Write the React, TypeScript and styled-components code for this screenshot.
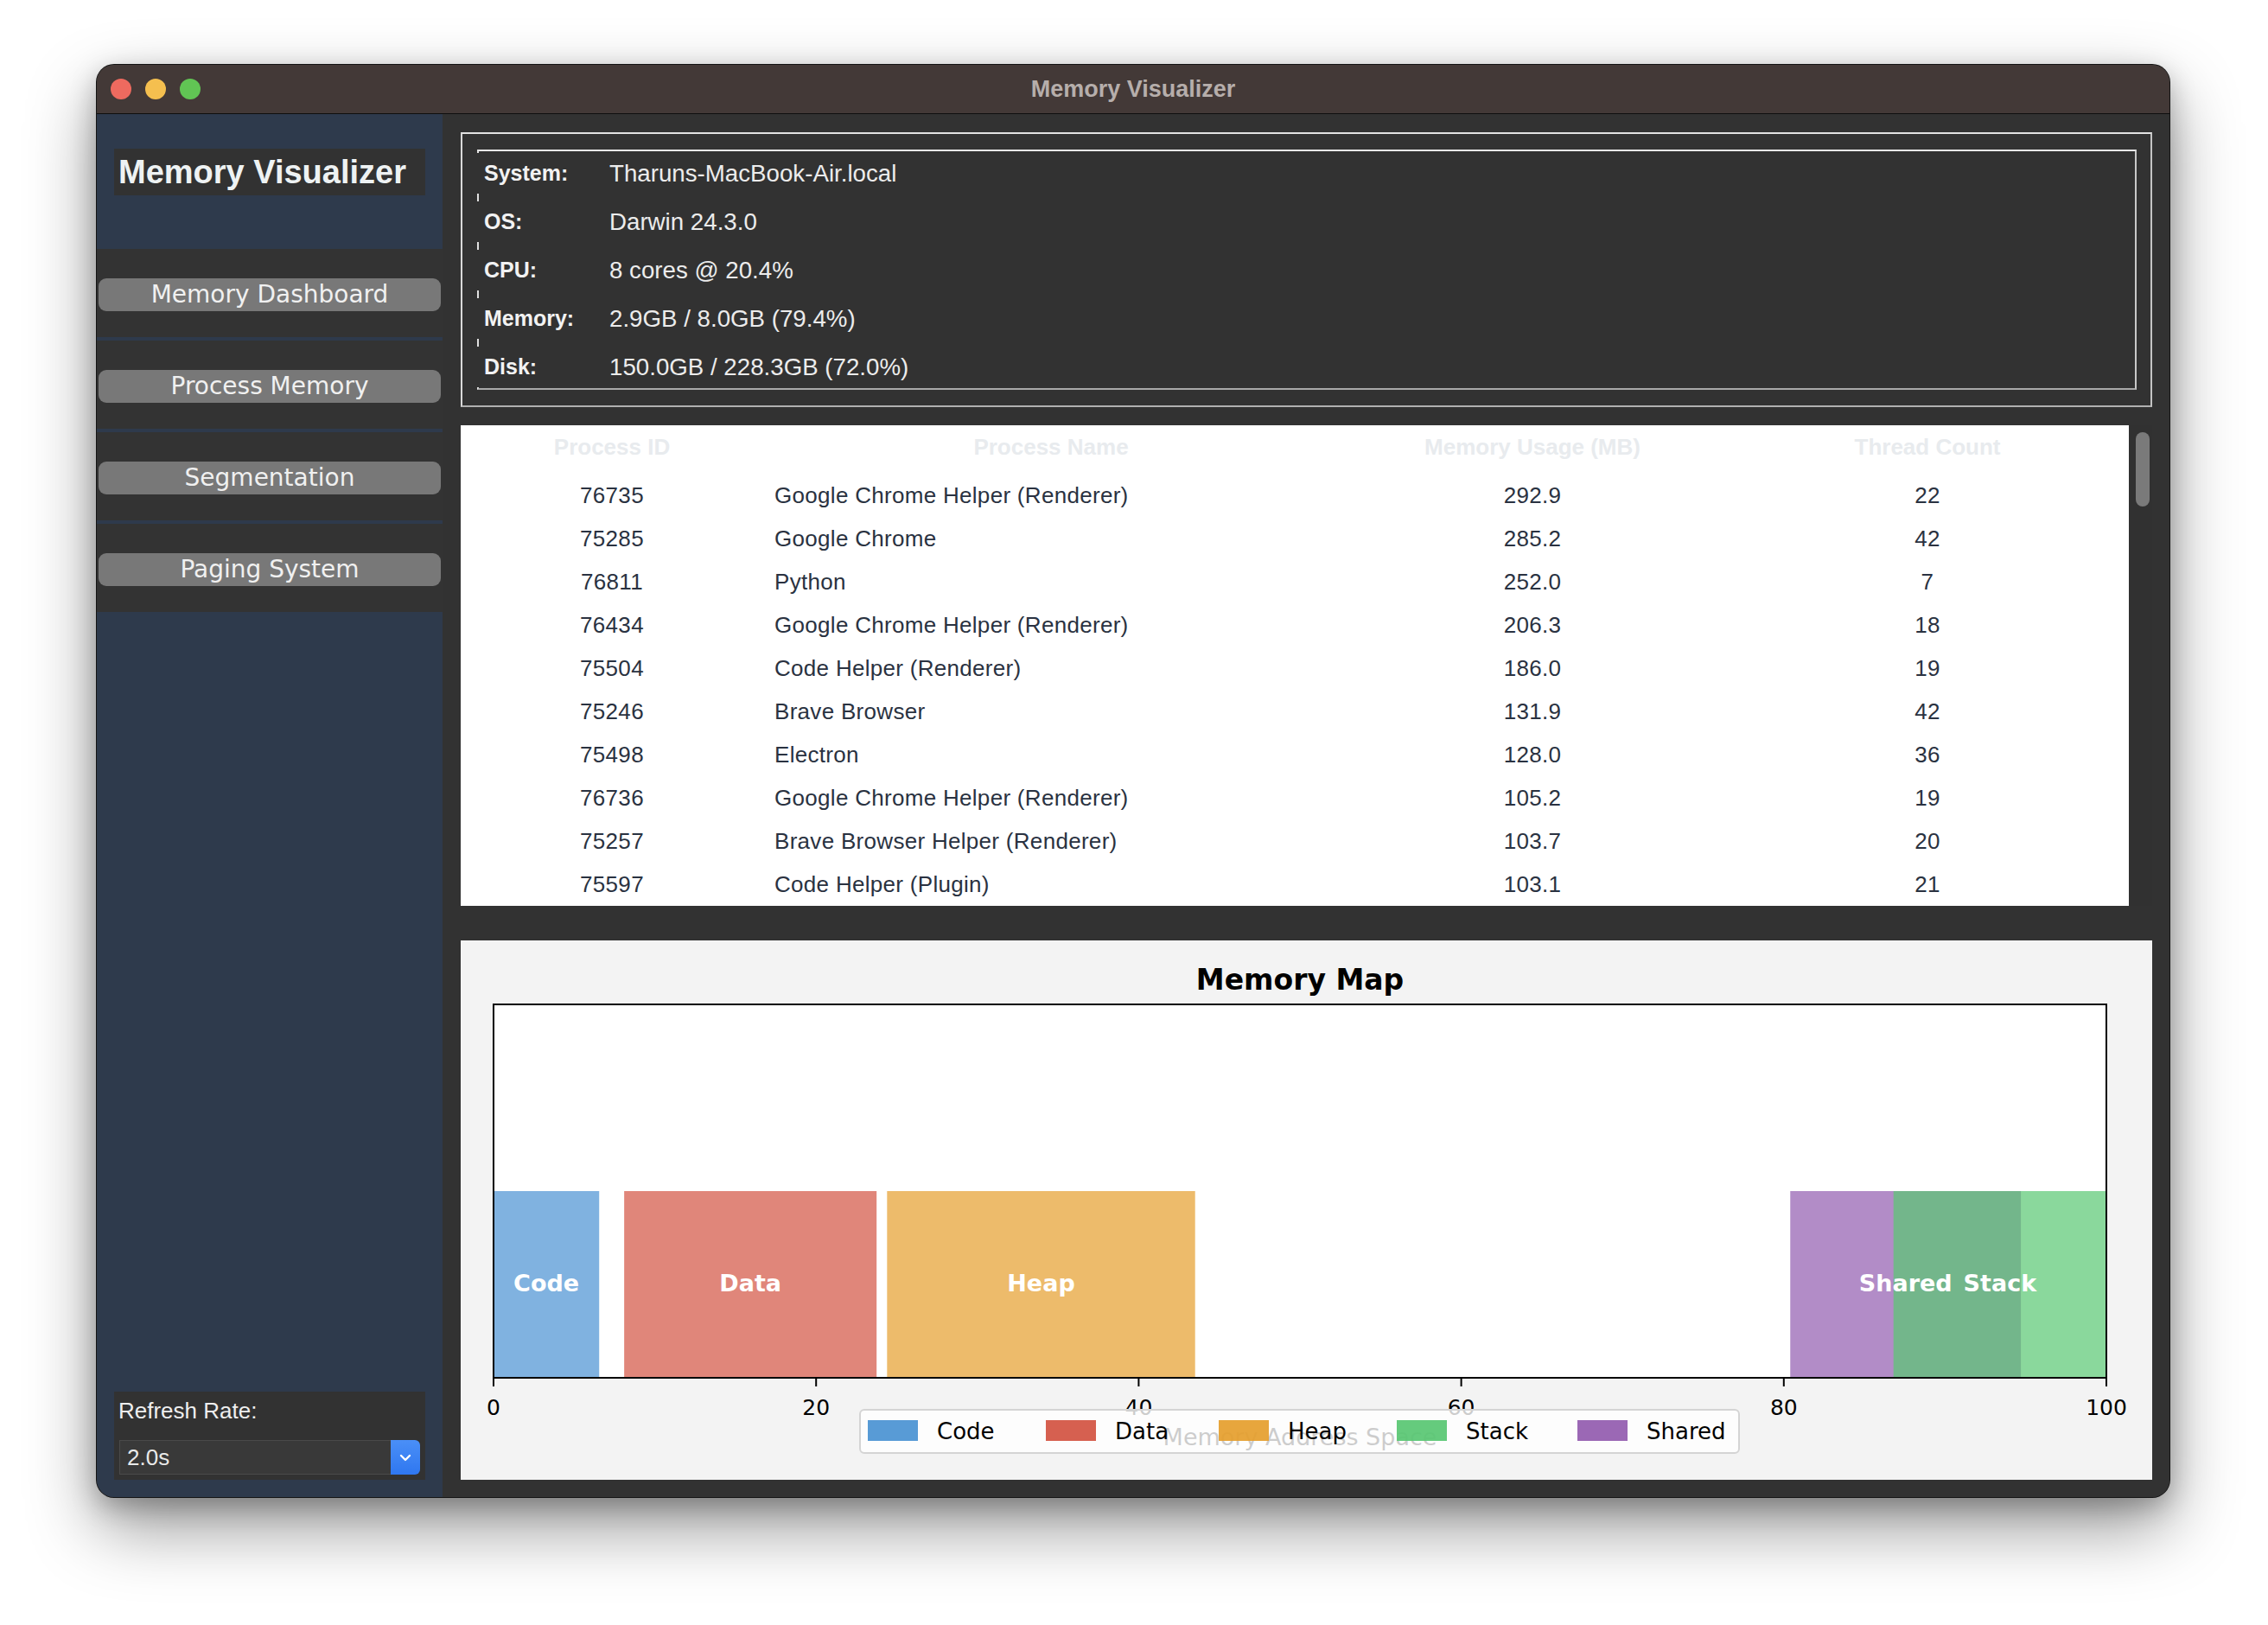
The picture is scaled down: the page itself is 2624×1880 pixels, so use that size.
import React from "react";
import styled, { createGlobalStyle } from "styled-components";

const GlobalStyle = createGlobalStyle`
  html, body {
    margin: 0;
    padding: 0;
    background: #ffffff;
  }
  body {
    font-family: "Liberation Sans", Arial, sans-serif;
  }
`;

const Page = styled.div`
  width: 2624px;
  height: 1880px;
  box-sizing: border-box;
  padding: 75px 0 0 112px;
`;

const Window = styled.div`
  width: 2398px;
  height: 1657px;
  border-radius: 20px;
  overflow: hidden;
  display: flex;
  flex-direction: column;
  background: #323232;
  box-shadow: 0 0 0 1px #141414, 0 34px 80px rgba(0, 0, 0, 0.42),
    0 10px 30px rgba(0, 0, 0, 0.25);
`;

const TitleBar = styled.div`
  height: 56px;
  flex: none;
  display: grid;
  grid-template-columns: 1fr auto 1fr;
  align-items: center;
  background: #433937;
  border-bottom: 1px solid #0e0e0e;
`;

const Lights = styled.div`
  display: flex;
  gap: 16px;
  padding-left: 16px;
`;

const Light = styled.span<{ $color: string }>`
  width: 24px;
  height: 24px;
  border-radius: 50%;
  background: ${(p) => p.$color};
`;

const WindowTitle = styled.div`
  color: #b6aeab;
  font-size: 27px;
  font-weight: 700;
  font-family: "Liberation Sans", Arial, sans-serif;
`;

const Body = styled.div`
  flex: 1;
  display: flex;
  min-height: 0;
`;

/* ---------- sidebar ---------- */

const Sidebar = styled.div`
  width: 400px;
  flex: none;
  display: flex;
  flex-direction: column;
  background: #2e3a4c;
`;

const LogoArea = styled.div`
  padding: 40px 20px 62px;
`;

const Logo = styled.div`
  height: 54px;
  display: flex;
  align-items: center;
  padding-left: 5px;
  background: #323232;
  color: #eef2f3;
  font-size: 38px;
  font-weight: 700;
  font-family: "Liberation Sans", Arial, sans-serif;
`;

const Nav = styled.div`
  display: flex;
  flex-direction: column;
  gap: 4px;
`;

const NavItem = styled.div`
  height: 102px;
  box-sizing: border-box;
  padding: 34px 2px 0;
  background: #333333;
`;

const NavButton = styled.button`
  width: 100%;
  height: 38px;
  border: 0;
  border-radius: 9px;
  background: #787878;
  color: #f0f0f0;
  font-family: "DejaVu Sans", Verdana, sans-serif;
  font-size: 28px;
  line-height: 38px;
  padding: 0;
  cursor: pointer;
`;

const Spacer = styled.div`
  flex: 1;
`;

const RefreshBox = styled.div`
  margin: 0 20px 20px;
  height: 102px;
  box-sizing: border-box;
  padding: 3px 6px 0 5px;
  background: #323232;
`;

const RefreshLabel = styled.div`
  color: #eeeeee;
  font-size: 26px;
  line-height: 38px;
`;

const Combo = styled.div`
  margin-top: 15px;
  display: flex;
  height: 40px;
  margin-left: 1px;
`;

const ComboField = styled.div`
  flex: 1;
  box-sizing: border-box;
  display: flex;
  align-items: center;
  padding-left: 8px;
  background: #393939;
  border: 1px solid #4a4a4a;
  border-right: 0;
  color: #e9e9e9;
  font-size: 26px;
`;

const ComboArrow = styled.div`
  width: 34px;
  display: flex;
  align-items: center;
  justify-content: center;
  border-radius: 0 6px 6px 0;
  background: linear-gradient(#4a8ff7, #2f77f0);
`;

/* ---------- main ---------- */

const Main = styled.div`
  flex: 1;
  display: flex;
  flex-direction: column;
  padding: 21px 20px 20px 21px;
  background: #323232;
`;

const InfoOuter = styled.div`
  height: 318px;
  box-sizing: border-box;
  padding: 18px 16px 18px 17px;
  border: 2px solid;
  border-color: #e2e2e2 #c4c4c4 #b0b0b0 #d8d8d8;
`;

const InfoInner = styled.div`
  display: flex;
  flex-direction: column;
  gap: 9px;
  padding: 2px 0 1px;
  border: 2px solid;
  border-color: #e8e8e8 #c8c8c8 #a8a8a8 #e0e0e0;
`;

const InfoRow = styled.div`
  height: 47px;
  margin-left: -2px;
  padding-left: 8px;
  display: flex;
  align-items: center;
  background: #323232;
`;

const InfoLabel = styled.span`
  width: 145px;
  flex: none;
  color: #f2f2f2;
  font-size: 25px;
  font-weight: 700;
`;

const InfoValue = styled.span`
  color: #ececec;
  font-size: 27.7px;
`;

const TableWrap = styled.div`
  margin-top: 21px;
  height: 556px;
  display: flex;
`;

const Table = styled.div`
  flex: 1;
  background: #ffffff;
  display: grid;
  grid-template-columns: 350px 666px 448px 1fr;
  grid-auto-rows: 50px;
  grid-template-rows: 56px;
  align-items: center;
`;

const HeadCell = styled.div`
  text-align: center;
  color: #e8ebee;
  font-size: 26px;
  font-weight: 700;
  padding-bottom: 6px;
`;

const Cell = styled.div<{ $left?: boolean }>`
  text-align: ${(p) => (p.$left ? "left" : "center")};
  padding-left: ${(p) => (p.$left ? "13px" : "0")};
  color: #2a3241;
  font-size: 26px;
  letter-spacing: 0.3px;
`;

const ScrollTrack = styled.div`
  width: 27px;
  flex: none;
  background: #313131;
  padding: 8px 0 0 8px;
  box-sizing: border-box;
`;

const ScrollThumb = styled.div`
  width: 16px;
  height: 86px;
  border-radius: 8px;
  background: #7a7a7a;
`;

const ChartPanel = styled.div`
  margin-top: 40px;
  height: 624px;
  background: #f3f3f3;
`;

const Chart = styled.svg`
  display: block;
  font-family: "DejaVu Sans", sans-serif;
`;

const info = [
  ["System:", "Tharuns-MacBook-Air.local"],
  ["OS:", "Darwin 24.3.0"],
  ["CPU:", "8 cores @ 20.4%"],
  ["Memory:", "2.9GB / 8.0GB (79.4%)"],
  ["Disk:", "150.0GB / 228.3GB (72.0%)"],
];

const processes = [
  ["76735", "Google Chrome Helper (Renderer)", "292.9", "22"],
  ["75285", "Google Chrome", "285.2", "42"],
  ["76811", "Python", "252.0", "7"],
  ["76434", "Google Chrome Helper (Renderer)", "206.3", "18"],
  ["75504", "Code Helper (Renderer)", "186.0", "19"],
  ["75246", "Brave Browser", "131.9", "42"],
  ["75498", "Electron", "128.0", "36"],
  ["76736", "Google Chrome Helper (Renderer)", "105.2", "19"],
  ["75257", "Brave Browser Helper (Renderer)", "103.7", "20"],
  ["75597", "Code Helper (Plugin)", "103.1", "21"],
];

const segments = [
  { name: "Code", start: 0, size: 6.55, color: "#4a92d3" },
  { name: "Data", start: 8.1, size: 15.65, color: "#d35241" },
  { name: "Heap", start: 24.4, size: 19.1, color: "#e59e2c" },
  { name: "Shared", start: 80.4, size: 14.3, color: "#925baf" },
  { name: "Stack", start: 86.8, size: 13.2, color: "#58c772" },
];

const legend = [
  { name: "Code", x: 471, color: "#4a92d3" },
  { name: "Data", x: 677, color: "#d35241" },
  { name: "Heap", x: 877, color: "#e59e2c" },
  { name: "Stack", x: 1083, color: "#58c772" },
  { name: "Shared", x: 1292, color: "#925baf" },
];

const AX = { left: 38, top: 74, right: 1904, bottom: 506 };
const toX = (u: number) => AX.left + (u / 100) * (AX.right - AX.left);
const BAR_TOP = 290;

const MemoryMap = () => (
  <Chart width={1957} height={624}>
    <text x={971} y={57} textAnchor="middle" fontSize={33} fontWeight={700} fill="#000">
      Memory Map
    </text>
    <rect x={AX.left} y={AX.top} width={AX.right - AX.left} height={AX.bottom - AX.top} fill="#fff" />
    {segments.map((s) => (
      <rect
        key={s.name}
        x={toX(s.start)}
        y={BAR_TOP}
        width={toX(s.start + s.size) - toX(s.start)}
        height={AX.bottom - BAR_TOP}
        fill={s.color}
        fillOpacity={0.7}
      />
    ))}
    {segments.map((s) => (
      <text
        key={s.name}
        x={(toX(s.start) + toX(s.start + s.size)) / 2}
        y={406}
        textAnchor="middle"
        fontSize={27}
        fontWeight={700}
        fill="#fff"
      >
        {s.name}
      </text>
    ))}
    <rect
      x={AX.left}
      y={AX.top}
      width={AX.right - AX.left}
      height={AX.bottom - AX.top}
      fill="none"
      stroke="#000"
      strokeWidth={2}
    />
    {[0, 20, 40, 60, 80, 100].map((t) => (
      <g key={t}>
        <line x1={toX(t)} x2={toX(t)} y1={AX.bottom} y2={AX.bottom + 10} stroke="#000" strokeWidth={2} />
        <text x={toX(t)} y={549} textAnchor="middle" fontSize={25} fill="#000">
          {t}
        </text>
      </g>
    ))}
    <text x={971} y={584} textAnchor="middle" fontSize={27} fill="#000">
      Memory Address Space
    </text>
    <rect x={462} y={543} width={1017} height={50} rx={5} fill="#fff" fillOpacity={0.8} stroke="#d4d4d4" strokeWidth={2} />
    {legend.map((l) => (
      <g key={l.name}>
        <rect x={l.x} y={555} width={58} height={24} fill={l.color} fillOpacity={0.92} />
        <text x={l.x + 80} y={577} fontSize={26} fill="#000">
          {l.name}
        </text>
      </g>
    ))}
  </Chart>
);

const Chevron = () => (
  <svg width="14" height="9" viewBox="0 0 14 9">
    <path d="M2 2 L7 7 L12 2" fill="none" stroke="#fff" strokeWidth="2.4" strokeLinecap="round" strokeLinejoin="round" />
  </svg>
);

const navItems = ["Memory Dashboard", "Process Memory", "Segmentation", "Paging System"];

const App = () => (
  <Page>
    <GlobalStyle />
    <Window>
      <TitleBar>
        <Lights>
          <Light $color="#ee6a5f" />
          <Light $color="#f5bf4f" />
          <Light $color="#61c554" />
        </Lights>
        <WindowTitle>Memory Visualizer</WindowTitle>
        <div />
      </TitleBar>
      <Body>
        <Sidebar>
          <LogoArea>
            <Logo>Memory Visualizer</Logo>
          </LogoArea>
          <Nav>
            {navItems.map((n) => (
              <NavItem key={n}>
                <NavButton>{n}</NavButton>
              </NavItem>
            ))}
          </Nav>
          <Spacer />
          <RefreshBox>
            <RefreshLabel>Refresh Rate:</RefreshLabel>
            <Combo>
              <ComboField>2.0s</ComboField>
              <ComboArrow>
                <Chevron />
              </ComboArrow>
            </Combo>
          </RefreshBox>
        </Sidebar>
        <Main>
          <InfoOuter>
            <InfoInner>
              {info.map(([k, v]) => (
                <InfoRow key={k}>
                  <InfoLabel>{k}</InfoLabel>
                  <InfoValue>{v}</InfoValue>
                </InfoRow>
              ))}
            </InfoInner>
          </InfoOuter>
          <TableWrap>
            <Table>
              <HeadCell>Process ID</HeadCell>
              <HeadCell>Process Name</HeadCell>
              <HeadCell>Memory Usage (MB)</HeadCell>
              <HeadCell>Thread Count</HeadCell>
              {processes.map((p) => (
                <React.Fragment key={p[0]}>
                  <Cell>{p[0]}</Cell>
                  <Cell $left>{p[1]}</Cell>
                  <Cell>{p[2]}</Cell>
                  <Cell>{p[3]}</Cell>
                </React.Fragment>
              ))}
            </Table>
            <ScrollTrack>
              <ScrollThumb />
            </ScrollTrack>
          </TableWrap>
          <ChartPanel>
            <MemoryMap />
          </ChartPanel>
        </Main>
      </Body>
    </Window>
  </Page>
);

export default App;
